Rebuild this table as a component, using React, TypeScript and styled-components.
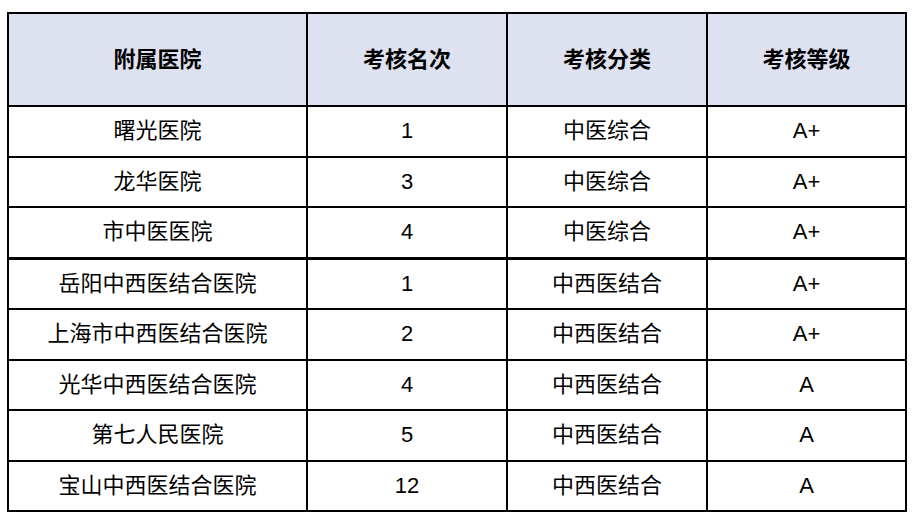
import styled, { createGlobalStyle } from "styled-components";

const GlobalStyle = createGlobalStyle`
  html, body {
    margin: 0;
    padding: 0;
    background: #ffffff;
  }
  body {
    font-family: "Liberation Sans", "Noto Sans CJK SC", sans-serif;
    color: #000;
  }
`;

type Row = {
  hospital: string;
  rank: string;
  category: string;
  grade: string;
  groupStart?: boolean;
};

const rows: Row[] = [
  { hospital: "曙光医院", rank: "1", category: "中医综合", grade: "A+" },
  { hospital: "龙华医院", rank: "3", category: "中医综合", grade: "A+" },
  { hospital: "市中医医院", rank: "4", category: "中医综合", grade: "A+" },
  { hospital: "岳阳中西医结合医院", rank: "1", category: "中西医结合", grade: "A+", groupStart: true },
  { hospital: "上海市中西医结合医院", rank: "2", category: "中西医结合", grade: "A+" },
  { hospital: "光华中西医结合医院", rank: "4", category: "中西医结合", grade: "A" },
  { hospital: "第七人民医院", rank: "5", category: "中西医结合", grade: "A" },
  { hospital: "宝山中西医结合医院", rank: "12", category: "中西医结合", grade: "A" },
];

export default function App() {
  return (
    <>
      <GlobalStyle />
      <Page>
        <Table>
          <colgroup>
            <col style={{ width: 299 }} />
            <col style={{ width: 200 }} />
            <col style={{ width: 200 }} />
            <col style={{ width: 199 }} />
          </colgroup>
          <thead>
            <tr>
              <HeadCell>附属医院</HeadCell>
              <HeadCell>考核名次</HeadCell>
              <HeadCell>考核分类</HeadCell>
              <HeadCell>考核等级</HeadCell>
            </tr>
          </thead>
          <tbody>
            {rows.map((r) => (
              <BodyRow key={r.hospital} $groupStart={r.groupStart}>
                <Cell>{r.hospital}</Cell>
                <Cell>{r.rank}</Cell>
                <Cell>{r.category}</Cell>
                <Cell>{r.grade}</Cell>
              </BodyRow>
            ))}
          </tbody>
        </Table>
      </Page>
    </>
  );
}

const Page = styled.div`
  padding: 12px 0 0 7px;
`;

const Table = styled.table`
  border-collapse: collapse;
  table-layout: fixed;
  width: 899px;
  border: 2px solid #000;
`;

const HeadCell = styled.th`
  height: 91px;
  padding: 0;
  background: #dee2f0;
  border: 2px solid #000;
  font-size: 22px;
  font-weight: 700;
  text-align: center;
  vertical-align: middle;
  line-height: 1;
`;

const BodyRow = styled.tr<{ $groupStart?: boolean }>`
  td {
    border-top: ${(p) => (p.$groupStart ? "3px" : "2px")} solid #000;
  }
`;

const Cell = styled.td`
  height: 48.5px;
  padding: 0;
  border: 2px solid #000;
  font-size: 22px;
  text-align: center;
  vertical-align: middle;
  line-height: 1;
`;
